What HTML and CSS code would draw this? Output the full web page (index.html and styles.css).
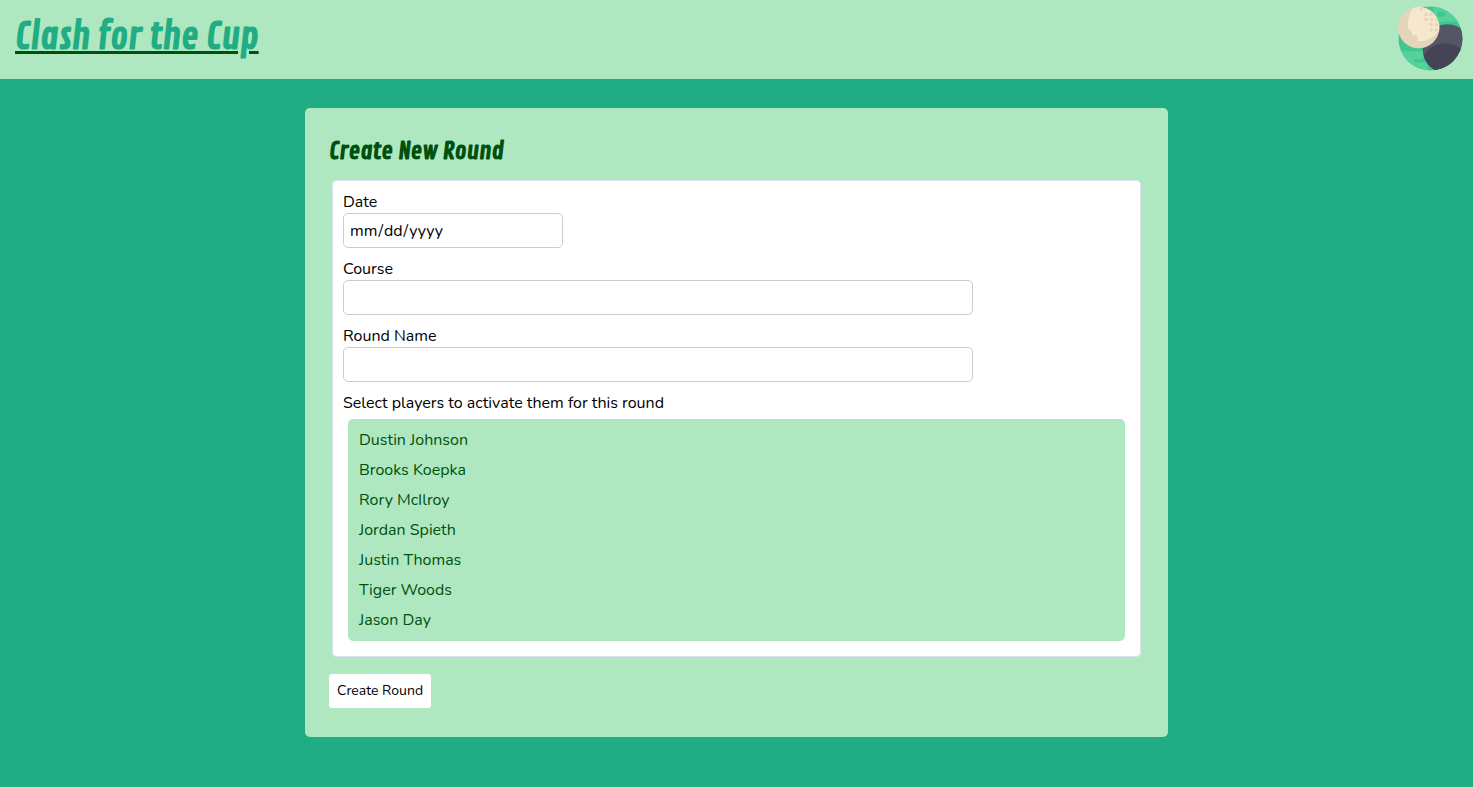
FILE: index.html
```html
<!DOCTYPE html>
<html lang="en-US">
<head>
<meta charset="utf-8">
<meta name="viewport" content="width=device-width, initial-scale=1">
<title>Clash for the Cup</title>
<link rel="stylesheet" href="styles.css">
</head>
<body>
<header class="site-header">
  <a class="site-link" href="#"><h1 class="site-title">Clash for the Cup</h1></a>
  <svg class="logo" viewBox="0 0 66 66" role="img" aria-label="Golf balls">
    <defs>
      <clipPath id="disc"><circle cx="33" cy="33" r="32.5"/></clipPath>
      <clipPath id="dark"><circle cx="50" cy="43.5" r="25"/></clipPath>
      <clipPath id="light"><circle cx="21" cy="22" r="21"/></clipPath>
    </defs>
    <g clip-path="url(#disc)">
      <path fill="#42c690" d="M0 0h66v66H0z"/>
      <path fill="#53d39b" d="M36 0h30v16H36zM0 46h26v8H16v3h14v9H0z"/>
      <path fill="#42c690" d="M40 6h5q3 0 3 2.500t-3 2.500h-5z"/>
      <circle cx="50" cy="43.500" r="25" fill="#555568"/>
      <circle cx="48" cy="64" r="26" fill="#444454" clip-path="url(#dark)"/>
    </g>
    <circle cx="21" cy="22" r="21" fill="#e5d5ba"/>
    <g clip-path="url(#light)">
      <path fill="#f7e8cd" d="M18 0Q10 7 10 19q0 3 2 6a2 2 0 0 1 2 3q0 2 2 2 2-1 3 1a2 2 0 0 1-1 4q8 2 15-2l12-10V0z"/>
      <g fill="#e5d5ba">
        <circle cx="23.500" cy="3.500" r="1.800"/><circle cx="28.500" cy="8.500" r="1.800"/><circle cx="33.800" cy="8.500" r="1.800"/>
        <circle cx="28.500" cy="13.800" r="1.800"/><circle cx="33.800" cy="13.800" r="1.800"/><circle cx="39" cy="13.800" r="1.800"/>
        <circle cx="33.800" cy="19" r="1.800"/><circle cx="39" cy="19" r="1.800"/><circle cx="33.800" cy="24.300" r="1.800"/><circle cx="39" cy="24.300" r="1.800"/>
      </g>
    </g>
  </svg>
</header>
<main class="card">
  <h2 class="card-title">Create New Round</h2>
  <form>
    <fieldset class="fields">
      <label class="label" for="date">Date</label>
      <input class="input input-date" type="date" id="date" name="date">
      <label class="label" for="course">Course</label>
      <input class="input" type="text" id="course" name="course">
      <label class="label" for="round">Round Name</label>
      <input class="input" type="text" id="round" name="round">
      <p class="label" id="players-label">Select players to activate them for this round</p>
      <ul class="players" aria-labelledby="players-label">
        <li><button class="player" type="button">Dustin Johnson</button></li>
        <li><button class="player" type="button">Brooks Koepka</button></li>
        <li><button class="player" type="button">Rory McIlroy</button></li>
        <li><button class="player" type="button">Jordan Spieth</button></li>
        <li><button class="player" type="button">Justin Thomas</button></li>
        <li><button class="player" type="button">Tiger Woods</button></li>
        <li><button class="player" type="button">Jason Day</button></li>
      </ul>
    </fieldset>
    <button class="submit" type="submit">Create Round</button>
  </form>
</main>
</body>
</html>
```

FILE: styles.css
```css
* {
  box-sizing: border-box;
}

body {
  margin: 0;
  min-height: 100vh;
  background: #21ad83;
  color: #000;
  font: 16px/22px Nunito, Lato, sans-serif;
}

.site-header {
  display: flex;
  justify-content: space-between;
  align-items: flex-start;
  padding: 6px 10px 8px 15px;
  background: #afe8c0;
}

.site-link {
  color: #00510f;
  text-decoration: underline;
  text-decoration-thickness: 3px;
}

.site-title,
.card-title {
  margin: 0;
  font-family: "Contrail One", "Yanone Kaffeesatz", "Roboto Condensed", sans-serif;
  font-weight: 700;
}

.site-title {
  color: #21ad83;
  font-size: 36px;
  line-height: 64px;
}

.logo {
  width: 65px;
  height: 65px;
}

.card {
  max-width: 863px;
  margin: 29px auto;
  padding: 27px 24px 29px;
  border-radius: 5px;
  background: #afe8c0;
}

.card-title {
  color: #00510f;
  font-size: 24px;
  line-height: 32px;
}

.fields {
  margin: 13px 3px 17px;
  padding: 10px 10px 15px;
  border: 1px solid #dcdff0;
  border-radius: 5px;
  background: #fff;
}

.label {
  display: block;
  margin: 0;
}

.input {
  display: block;
  width: 80%;
  height: 35px;
  margin: 0 0 10px;
  padding: 5px;
  border: 1px solid #ccc;
  border-radius: 5px;
  background: #fff;
  color: #000;
  font: inherit;
}

.input-date {
  width: 220px;
}

.input-date::-webkit-calendar-picker-indicator {
  display: none;
}

.players {
  margin: 5px 5px 0;
  padding: 6px;
  border-radius: 5px;
  background: #afe8c0;
  list-style: none;
}

.player {
  display: block;
  width: 100%;
  padding: 4px 5px;
  border: 0;
  background: none;
  color: #00510f;
  font: inherit;
  text-align: left;
}

.submit {
  display: block;
  padding: 6px 8px;
  border: 0;
  border-radius: 3px;
  background: #fff;
  color: #000;
  font: inherit;
  font-size: 14px;
}
```
